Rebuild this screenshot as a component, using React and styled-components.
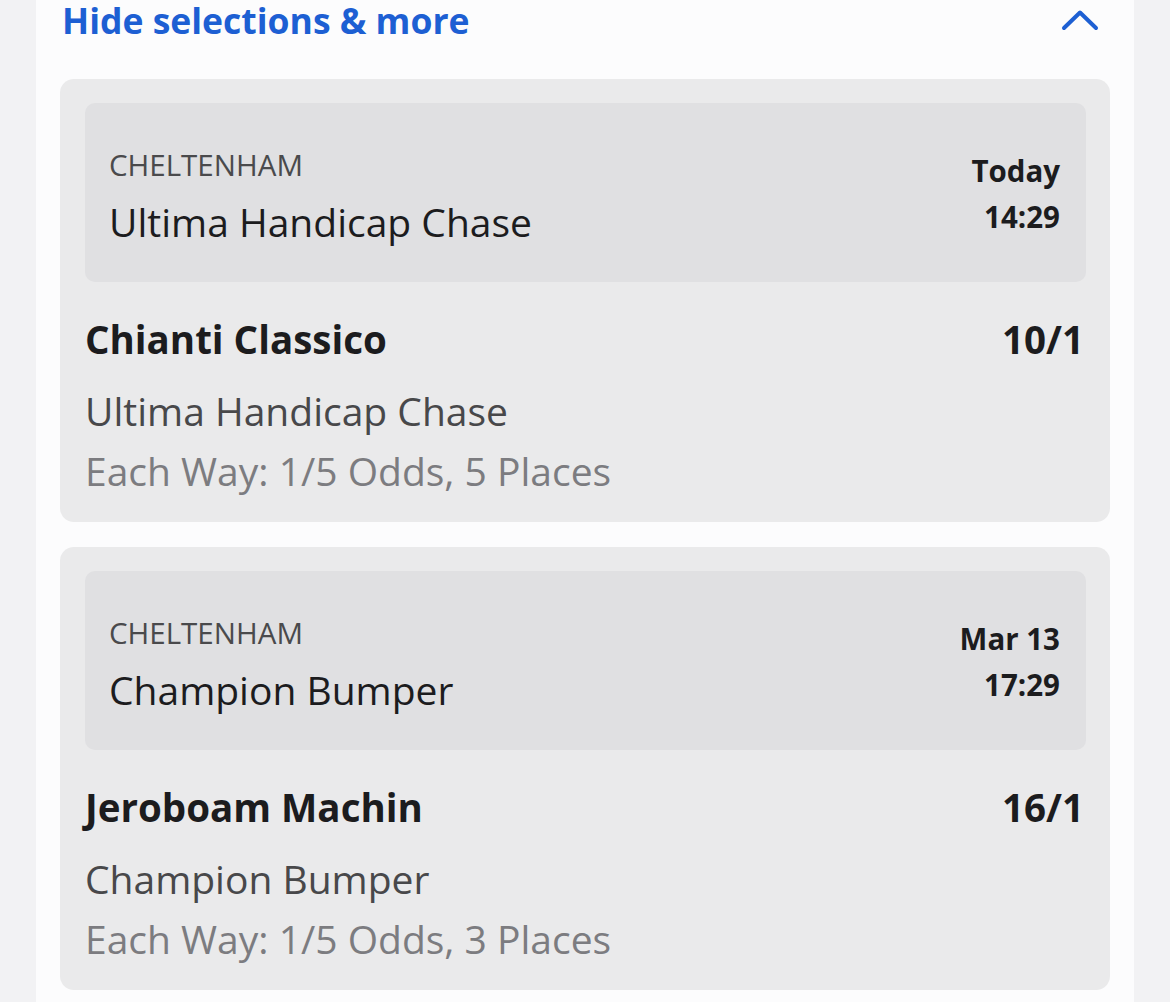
import styled, { createGlobalStyle } from 'styled-components'

/*---> Data <---*/
const selections = [
  {
    course: 'CHELTENHAM',
    race: 'Ultima Handicap Chase',
    day: 'Today',
    time: '14:29',
    runner: 'Chianti Classico',
    odds: '10/1',
    terms: 'Each Way: 1/5 Odds, 5 Places',
  },
  {
    course: 'CHELTENHAM',
    race: 'Champion Bumper',
    day: 'Mar 13',
    time: '17:29',
    runner: 'Jeroboam Machin',
    odds: '16/1',
    terms: 'Each Way: 1/5 Odds, 3 Places',
  },
]

/*---> Component <---*/
const App = () => {
  return (
    <>
      <GlobalStyle />
      <Page>
        <Panel>
          <Header>
            <HeaderTitle>Hide selections &amp; more</HeaderTitle>
            <svg width="38" height="24" viewBox="0 0 38 24" fill="none">
              <path
                d="M3 20 L19 4.5 L35 20"
                stroke="#1d5fd3"
                strokeWidth="4"
                strokeLinecap="round"
                strokeLinejoin="round"
              />
            </svg>
          </Header>
          <CardList>
            {selections.map((s) => (
              <Card key={s.runner}>
                <RaceBox>
                  <RaceInfo>
                    <Course>{s.course}</Course>
                    <RaceName>{s.race}</RaceName>
                  </RaceInfo>
                  <RaceTime>
                    <TimeText>{s.day}</TimeText>
                    <TimeText>{s.time}</TimeText>
                  </RaceTime>
                </RaceBox>
                <RunnerRow>
                  <Runner>{s.runner}</Runner>
                  <Runner>{s.odds}</Runner>
                </RunnerRow>
                <Market>{s.race}</Market>
                <Terms>{s.terms}</Terms>
              </Card>
            ))}
          </CardList>
        </Panel>
      </Page>
    </>
  )
}

export default App

/*---> Styles <---*/
const GlobalStyle = createGlobalStyle`
  html, body {
    margin: 0;
    padding: 0;
    background: #f2f2f4;
    font-family: "Open Sans", "Noto Sans", sans-serif;
  }
`

const Page = styled.div`
  min-height: 1002px;
  padding: 0 36px;
  background: #f2f2f4;
`

const Panel = styled.div`
  background: #fcfcfd;
  min-height: 1002px;
  padding: 0 24px;
`

const Header = styled.div`
  display: flex;
  justify-content: space-between;
  align-items: center;
  height: 40px;
  padding: 0 11px 0 2px;
  margin-bottom: 39px;
`

const HeaderTitle = styled.div`
  color: #1d5fd3;
  font-size: 35.5px;
  font-weight: 700;
  line-height: 40px;
`

const CardList = styled.div`
  display: flex;
  flex-direction: column;
  gap: 25px;
`

const Card = styled.div`
  background: #eaeaeb;
  border-radius: 14px;
  padding: 24px 24px 26px 25px;
`

const RaceBox = styled.div`
  display: flex;
  justify-content: space-between;
  align-items: flex-start;
  background: #e0e0e2;
  border-radius: 10px;
  height: 179px;
  box-sizing: border-box;
  padding: 44px 26px 0 24px;
`

const RaceInfo = styled.div`
  display: flex;
  flex-direction: column;
  gap: 15px;
`

const Course = styled.div`
  color: #4a4a4c;
  font-size: 29.5px;
  line-height: 36px;
`

const RaceName = styled.div`
  color: #1c1c1e;
  font-size: 39px;
  line-height: 48px;
`

const RaceTime = styled.div`
  display: flex;
  flex-direction: column;
  align-items: flex-end;
  gap: 10px;
  margin-top: 6px;
`

const TimeText = styled.div`
  color: #1c1c1e;
  font-size: 29.5px;
  font-weight: 700;
  line-height: 36px;
`

const RunnerRow = styled.div`
  display: flex;
  justify-content: space-between;
  align-items: center;
  margin-top: 32px;
  padding-right: 2px;
`

const Runner = styled.div`
  color: #1c1c1e;
  font-size: 38.5px;
  font-weight: 700;
  line-height: 50px;
`

const Market = styled.div`
  color: #48484a;
  font-size: 39px;
  line-height: 50px;
  margin-top: 22px;
`

const Terms = styled.div`
  color: #7c7c80;
  font-size: 39px;
  line-height: 50px;
  margin-top: 10px;
`
